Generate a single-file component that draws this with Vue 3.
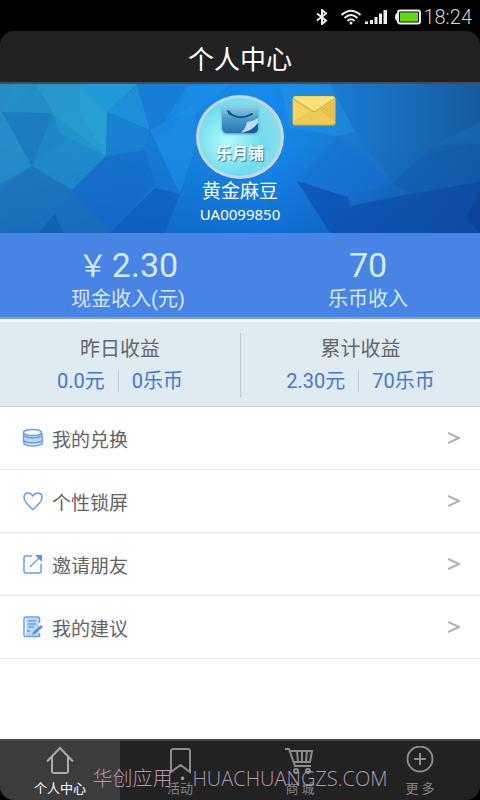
<script setup>
import { ref } from 'vue'

const balances = [
  { currency: '￥', amount: '2.30', label: '现金收入(元)' },
  { currency: '', amount: '70', label: '乐币收入' },
]
const earnings = [
  { title: '昨日收益', cash: '0.0元', coins: '0乐币' },
  { title: '累计收益', cash: '2.30元', coins: '70乐币' },
]
const menu = [
  { icon: 'coins', label: '我的兑换' },
  { icon: 'heart', label: '个性锁屏' },
  { icon: 'share', label: '邀请朋友' },
  { icon: 'note', label: '我的建议' },
]
const tabs = [
  { icon: 'home', label: '个人中心' },
  { icon: 'bookmark', label: '活动' },
  { icon: 'cart', label: '商 城' },
  { icon: 'more', label: '更 多' },
]
const active = ref('home')

// Facets of the low-poly banner: points, fill, opacity
const facets = [
  ['0,0 35,0 2,28 32,82 0,100', '#2a93cd', 0.5],
  ['2,28 53,29 72,52 32,82', '#1a74b8', 0.55],
  ['35,0 80,0 80,29 53,29', '#2fa5cc', 0.6],
  ['35,0 53,29 2,28 14,0', '#2794c6', 0.6],
  ['53,29 80,29 106,72 60,50', '#2fa9cf', 0.6],
  ['80,0 107,28 106,72 80,29', '#31b1d4', 0.6],
  ['80,0 137,0 107,28', '#25a9df', 0.6],
  ['137,2 150,46 107,28', '#2196de', 0.6],
  ['107,28 150,46 145,66 106,72', '#1a80d2', 0.55],
  ['53,29 106,72 72,106 32,82', '#218fcb', 0.6],
  ['32,82 72,106 43,138 0,149 0,104', '#1d70b6', 0.55],
  ['106,72 145,66 155,100 110,149 72,106', '#1468c6', 0.6],
  ['72,106 110,149 63,149 55,130', '#1d6cb9', 0.6],
  ['55,130 63,149 38,149', '#0d55a0', 0.5],
  ['155,104 180,110 165,149 110,149', '#0e58b8', 0.6],
  ['145,66 150,46 180,110 155,104', '#1673d4', 0.5],
  ['137,0 187,2 170,52 150,46', '#1678d6', 0.5],
  ['150,46 195,20 196,60 180,110', '#1f90ee', 0.5],
  ['187,2 230,0 195,30 165,36', '#1b91f0', 0.5],
  ['280,0 330,0 355,48 338,52 290,44', '#239be8', 0.4],
  ['338,52 393,99 348,113 297,97', '#1672d4', 0.45],
  ['338,52 355,48 393,99', '#1f7bd2', 0.35],
  ['297,97 348,113 330,149', '#0b48a8', 0.6],
  ['348,113 393,99 350,122', '#1769c1', 0.5],
  ['348,113 350,122 410,110 398,149 330,149', '#0b44a2', 0.55],
  ['393,99 433,62 480,54 480,98 410,110', '#1158b0', 0.45],
  ['410,110 480,98 480,149 398,149', '#0b46a2', 0.55],
  ['480,108 480,149 466,134', '#093b90', 0.5],
  ['433,62 480,38 480,60', '#1c6dbd', 0.4],
]
</script>

<template>
  <div class="screen">
    <div class="status">
      <svg class="bluetooth" viewBox="0 0 12 16" aria-hidden="true">
        <path d="M1 4.500 10 11.500 6 15V1l4 3.500L1 11.500" />
      </svg>
      <svg class="wifi" viewBox="0 0 22 16" aria-hidden="true">
        <path d="M1.500 6Q11-2.500 20.500 6M4.500 9Q11 3 17.500 9M7.500 12Q11 8.500 14.500 12" />
        <circle cx="11" cy="14" r="1.500" />
      </svg>
      <svg class="signal" viewBox="0 0 22 16" aria-hidden="true">
        <path d="M0 12.500h3V15H0zM5 11h3v4H5zM9.500 8h3v7h-3zM14 4.500h3V15h-3zM18.500 1H22v14h-3.500z" />
      </svg>
      <svg class="battery" viewBox="0 0 26 16" aria-hidden="true">
        <rect x="3" y="1.500" width="22" height="13" rx="2" />
        <path class="tip" d="M3 4Q0 4 0 8t3 4z" />
        <rect class="charge" x="5" y="3.500" width="18" height="9" />
      </svg>
      <time>18:24</time>
    </div>

    <header class="titlebar"><h1>个人中心</h1></header>

    <section class="hero">
      <svg class="facets" viewBox="0 0 480 149" preserveAspectRatio="none" aria-hidden="true">
        <polygon v-for="(f, i) in facets" :key="i" :points="f[0]" :fill="f[1]" :fill-opacity="f[2]" />
      </svg>
      <div class="profile">
        <div class="avatar">
          <svg class="bag" viewBox="0 0 38 36" aria-hidden="true">
            <defs>
              <linearGradient id="bagFill" x1="0" y1="0" x2="0" y2="1">
                <stop offset="0" stop-color="#8fd0ea" />
                <stop offset="0.450" stop-color="#4a9dcc" />
                <stop offset="1" stop-color="#2775b2" />
              </linearGradient>
            </defs>
            <path d="M1 8H37V29Q37 35 31 35H7Q1 35 1 29z" fill="url(#bagFill)" />
            <path d="M8 15Q19 23 31 16" fill="none" stroke="#195483" stroke-width="2" stroke-linecap="round" />
            <path d="M7 13l3 3" stroke="#195483" stroke-width="2" stroke-linecap="round" />
            <path d="M20 35Q25 30 26 24 33 23 37 20V29Q31 32 20 35z" fill="#c0dcf3" />
            <path d="M22 35Q32 32 37 25V30Q37 35 31 35z" fill="#145aa2" />
          </svg>
          <span class="brand">乐月铺</span>
        </div>
        <strong class="name">黄金麻豆</strong>
        <span class="uid">UA0099850</span>
        <button class="mail" type="button" aria-label="消息">
          <svg viewBox="0 0 44 30" aria-hidden="true">
            <rect x="0.500" y="0.500" width="43" height="29" rx="3" fill="#dfb93f" />
            <rect x="1" y="0" width="42" height="28" rx="3" fill="#f2d462" />
            <path d="M1 26 22 11 43 26Q42 28 40 28H4Q2 28 1 26z" fill="#ecca54" />
            <path d="M43 5V26L27 14z" fill="#e4c04c" />
            <path d="M2 1H42L22 16z" fill="#fbe277" />
            <path d="M1 3 22 16 43 3" fill="none" stroke="#c9a43b" stroke-width="1" />
          </svg>
        </button>
      </div>
    </section>

    <section class="balances">
      <div v-for="b in balances" :key="b.label" class="balance">
        <div class="amount"><span v-if="b.currency" class="yen">{{ b.currency }}</span><span>{{ b.amount }}</span></div>
        <div class="caption">{{ b.label }}</div>
      </div>
    </section>

    <section class="earnings">
      <div v-for="e in earnings" :key="e.title" class="earning">
        <h2>{{ e.title }}</h2>
        <div class="pair"><span>{{ e.cash }}</span><i></i><span>{{ e.coins }}</span></div>
      </div>
    </section>

    <nav class="menu">
      <a v-for="m in menu" :key="m.icon" href="#">
        <svg viewBox="0 0 22 22" aria-hidden="true">
          <template v-if="m.icon === 'coins'">
            <path class="tint" d="M2 6v3l1 2-1 1v3q9 5 18 0v-3l1-2-1-2V6z" />
            <ellipse class="paper" cx="10.500" cy="5.500" rx="9" ry="3" />
            <path d="M1.500 6v3q9 4 18.500 0V6M2 9l-.5 2v3q9 4 19 0v-4M2 14v3q9 4 18 0v-3" />
          </template>
          <path v-else-if="m.icon === 'heart'" d="M11 19.500C7 16 2 12 2 7.500 2 2 8.500 1.500 11 6c2.500-4.500 9-4 9 1.500C20 12 15 16 11 19.500z" />
          <template v-else-if="m.icon === 'share'">
            <path d="M10 3H4Q2 3 2 5v13q0 2 2 2h13q2 0 2-2v-7" />
            <path d="M8 14 18 4" />
            <path class="solid" d="M13 2h7v7z" />
          </template>
          <template v-else>
            <path class="tint" d="M4 2h13v18H4z" />
            <path d="M17.500 7V3q0-2-2-2H4Q2 1 2 3v16q0 1.500 2 1.500h13.500V17M6 5h8M6 8h8M6 11h6M5 15h3" />
            <path class="solid" d="m11 16 8-7 2 2-8 7-3 1z" />
          </template>
        </svg>
        <span>{{ m.label }}</span>
        <svg class="chevron" viewBox="0 0 12 14" aria-hidden="true"><path d="M0 2 11 7 0 12" /></svg>
      </a>
    </nav>

    <footer class="dock">
      <nav class="tabs">
        <button
          v-for="t in tabs"
          :key="t.icon"
          type="button"
          :class="{ active: active === t.icon }"
          @click="active = t.icon"
        >
          <svg viewBox="0 0 30 28" aria-hidden="true">
            <path v-if="t.icon === 'home'" d="M2 15.500 15 2l13 13.500M7 11v14q0 2 2 2h12q2 0 2-2V11" />
            <path v-else-if="t.icon === 'bookmark'" d="M6 26V5q0-2 2-2h15q2 0 2 2v21l-9.500-7z" />
            <template v-else-if="t.icon === 'cart'">
              <path d="M0 3h4l6 17h16M5 5h22l-2 11H9M12 5l1 11M17 5v11M22 5l-1 11" />
              <circle cx="11" cy="25" r="2" /><circle cx="23" cy="25" r="2" />
            </template>
            <template v-else>
              <circle cx="15" cy="13" r="12.500" />
              <path d="M15 7v12M9 13h12" />
            </template>
          </svg>
          <span>{{ t.label }}</span>
        </button>
      </nav>
      <div class="watermark"><span>华创应用</span><span class="dot">•</span><span>HUACHUANGZS.COM</span></div>
    </footer>
  </div>
</template>

<style>
body {
  margin: 0;
  background: #fff;
}
</style>

<style scoped>
.screen {
  display: flex;
  flex-direction: column;
  min-height: 100vh;
  background: #fff;
  font-family: Roboto, 'Noto Sans CJK SC', sans-serif;
}
h1, h2 {
  margin: 0;
  font-weight: 400;
}
button {
  border: 0;
  padding: 0;
  background: none;
  font: inherit;
  color: inherit;
}
.status {
  display: flex;
  align-items: center;
  justify-content: flex-end;
  height: 31px;
  padding: 2px 8px 0 0;
  box-sizing: border-box;
  background: #000;
  color: #d4d4d4;
}
.status svg {
  height: 16px;
  fill: #eee;
}
.status .bluetooth {
  width: 12px;
  margin-right: 12px;
  fill: none;
  stroke: #eee;
  stroke-width: 2;
}
.wifi {
  width: 22px;
  margin-right: 3px;
}
.wifi path {
  fill: none;
  stroke: #eee;
  stroke-width: 2;
}
.signal {
  width: 22px;
  margin-right: 8px;
}
.battery {
  width: 26px;
  margin-right: 2px;
}
.battery rect {
  fill: #111;
  stroke: #eee;
  stroke-width: 2;
}
.battery .charge {
  fill: #62d90e;
  stroke: none;
}
time {
  font-size: 20px;
  font-weight: 300;
  line-height: 28px;
}
.titlebar {
  background: #000;
}
.titlebar h1 {
  height: 53px;
  box-sizing: border-box;
  padding-top: 1px;
  border-bottom: 2px solid #4a4a48;
  border-radius: 14px 14px 0 0;
  background: #222;
  color: #fff;
  font-size: 26px;
  line-height: 56px;
  text-align: center;
}
.hero {
  display: grid;
  height: 149px;
  background: linear-gradient(180deg, transparent 40%, rgba(5, 70, 180, 0.4)),
    linear-gradient(90deg, #2287c4, #1783d8 35%, #168bee 55%, #1a76cb 75%, #175b9e);
}
.hero > * {
  grid-area: 1 / 1;
}
.facets {
  width: 100%;
  height: 149px;
}
.profile {
  position: relative;
  display: flex;
  flex-direction: column;
  align-items: center;
  justify-self: center;
  padding-top: 11px;
  color: #fff;
}
.avatar {
  display: flex;
  flex-direction: column;
  align-items: center;
  width: 88px;
  height: 84px;
  box-sizing: border-box;
  border: 3px solid #c3d7e5;
  border-radius: 50%;
  background: radial-gradient(circle at 35% 55%, #b4fafa, #6fdcec 50%, #a2dfe9);
  overflow: hidden;
}
.bag {
  width: 38px;
  height: 36px;
  filter: drop-shadow(0 1px 1px #4390b0);
}
.brand {
  margin-top: 9px;
  color: #f6ffff;
  font-size: 16px;
  font-weight: 700;
  line-height: 22px;
  text-shadow: 1px 1px 1px #347c91;
}
.name {
  font-size: 19px;
  font-weight: 400;
  line-height: 26px;
}
.uid {
  font-family: 'Noto Sans', sans-serif;
  font-size: 15px;
  line-height: 18px;
}
.mail {
  position: absolute;
  top: 12px;
  left: 50%;
  width: 44px;
  height: 30px;
  margin-left: 52px;
}
.mail svg {
  display: block;
}
.balances {
  display: grid;
  grid-template-columns: 1fr 1fr;
  padding: 12px 0 4px;
  border-bottom: 2px solid #7f9fd0;
  background: #4884e3;
  color: #d6e8fc;
  text-align: center;
}
.balance {
  padding-left: 16px;
}
.amount {
  display: flex;
  justify-content: center;
  gap: 4px;
  height: 40px;
  font-size: 34px;
  line-height: 40px;
}
.yen {
  font-family: 'Noto Sans CJK SC', sans-serif;
  font-size: 30px;
  line-height: 36px;
}
.caption {
  font-size: 20px;
  line-height: 28px;
}
.earnings {
  display: grid;
  grid-template-columns: 1fr 1fr;
  padding: 11px 0 9px;
  border-top: 3px solid #f2f8fb;
  border-bottom: 1px solid #c8ced2;
  background: #dfeaf1;
  text-align: center;
}
.earning + .earning {
  border-left: 1px solid #bcc7cd;
}
.earning h2 {
  color: #646669;
  font-size: 20px;
  line-height: 32px;
}
.pair {
  display: flex;
  align-items: center;
  justify-content: center;
  gap: 13px;
  color: #4679c6;
  font-size: 20px;
  line-height: 32px;
}
.pair i {
  width: 1px;
  height: 22px;
  background: #c2ccd4;
}
.menu a {
  display: flex;
  align-items: center;
  height: 63px;
  box-sizing: border-box;
  padding: 0 20px 0 22px;
  border-bottom: 1px solid #e6e6e6;
  color: #636363;
  font-size: 19px;
  text-decoration: none;
}
.menu span {
  flex: 1;
  margin-left: 8px;
}
.menu svg {
  width: 22px;
  height: 22px;
  fill: none;
  stroke: #699fe6;
  stroke-width: 1.5;
}
.menu .tint {
  fill: #b9dafb;
  stroke: none;
}
.menu .paper {
  fill: #f4faff;
}
.menu .solid {
  fill: #5a91dc;
  stroke: none;
}
.menu .chevron {
  width: 12px;
  height: 14px;
  stroke: #b0b0b0;
  stroke-width: 2;
}
.dock {
  position: relative;
  margin-top: auto;
  background: #000;
}
.tabs {
  display: grid;
  grid-template-columns: repeat(4, 1fr);
  height: 61px;
  box-sizing: border-box;
  border-top: 2px solid #484848;
  border-radius: 0 0 14px 14px;
  background: #222;
  overflow: hidden;
}
.tabs button {
  display: flex;
  flex-direction: column;
  align-items: center;
  padding-top: 5px;
  color: #858585;
  font-size: 13px;
  line-height: 20px;
}
.tabs .active {
  background: #3c3c3c;
  color: #fff;
}
.tabs svg {
  width: 30px;
  height: 28px;
  margin-bottom: 5px;
  fill: none;
  stroke: #8c8c8c;
  stroke-width: 2;
}
.tabs .active svg {
  stroke: #aaa;
}
.watermark {
  position: absolute;
  top: 27px;
  left: 0;
  right: 0;
  display: flex;
  justify-content: center;
  color: #b198b1;
  font-family: 'Open Sans', 'Noto Sans CJK SC', sans-serif;
  font-size: 20px;
  font-weight: 300;
  line-height: 26px;
  pointer-events: none;
}
.watermark .dot {
  width: 20px;
  text-align: center;
}
</style>
